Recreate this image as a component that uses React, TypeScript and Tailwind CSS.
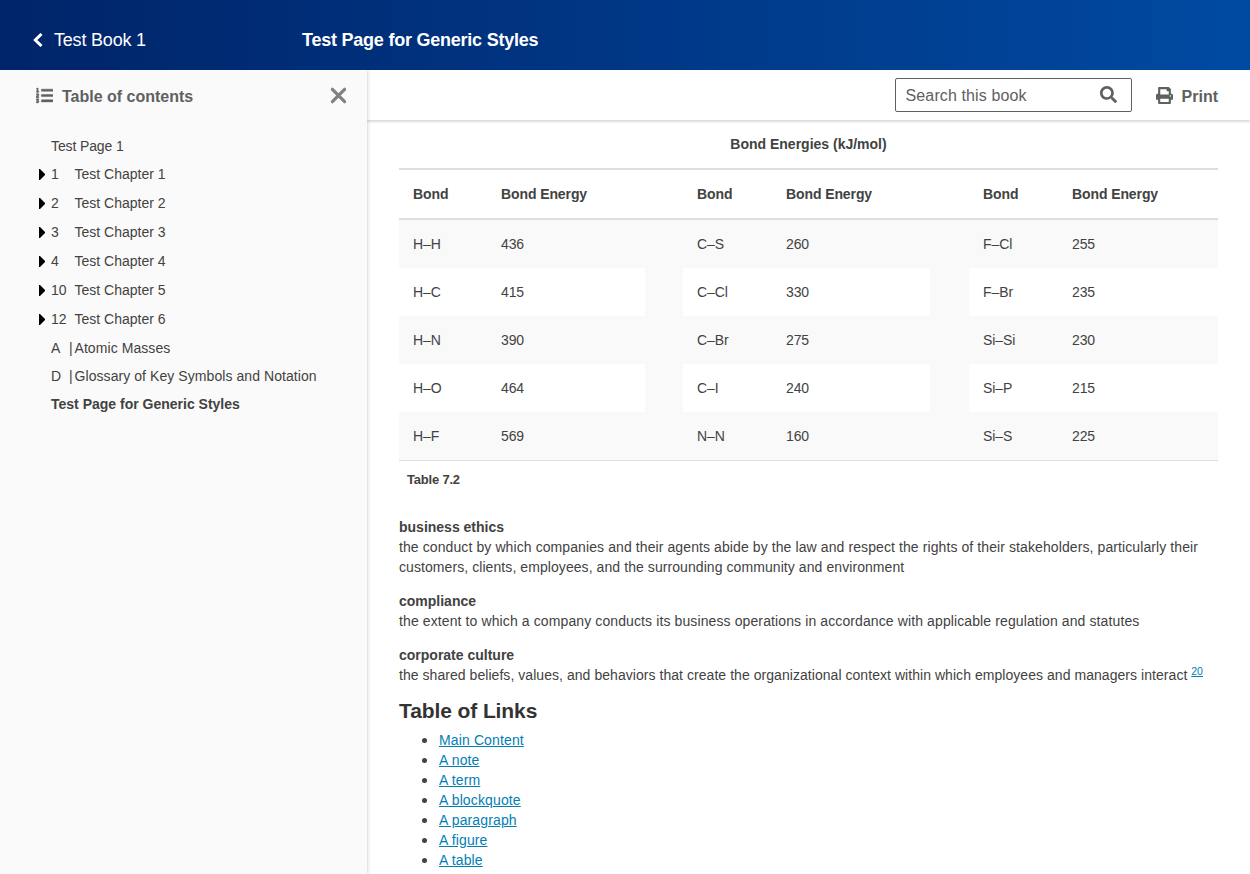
import type { ReactNode } from "react";
import { FaListOl, FaPrint, FaSearch } from "react-icons/fa";

const chapters = [
  ["1", "Test Chapter 1"],
  ["2", "Test Chapter 2"],
  ["3", "Test Chapter 3"],
  ["4", "Test Chapter 4"],
  ["10", "Test Chapter 5"],
  ["12", "Test Chapter 6"],
];

const appendices = [
  ["A", "Atomic Masses"],
  ["D", "Glossary of Key Symbols and Notation"],
];

const bonds = [
  ["H–H", "436", "C–S", "260", "F–Cl", "255"],
  ["H–C", "415", "C–Cl", "330", "F–Br", "235"],
  ["H–N", "390", "C–Br", "275", "Si–Si", "230"],
  ["H–O", "464", "C–I", "240", "Si–P", "215"],
  ["H–F", "569", "N–N", "160", "Si–S", "225"],
];

const links = ["Main Content", "A note", "A term", "A blockquote", "A paragraph", "A figure", "A table"];

function Header() {
  return (
    <header className="relative z-30 flex h-[70px] shrink-0 items-center bg-[linear-gradient(to_right,#002469,#004aa2)] pt-[10px] pl-[33px] text-[18px] leading-[30px] text-white">
      <a className="flex w-[269px] items-center">
        <svg className="mr-[11px] h-[14px] w-[10px]" viewBox="0 0 10 14" fill="none">
          <path d="M8.5 1 2.3 7l6.2 6" stroke="currentColor" strokeWidth="3" />
        </svg>
        <span className="tracking-[-0.2px]">Test Book 1</span>
      </a>
      <h1 className="font-bold tracking-[-0.23px]">Test Page for Generic Styles</h1>
    </header>
  );
}

function Sidebar() {
  return (
    <aside className="relative z-20 w-[367px] shrink-0 bg-[#fafafa] shadow-[0_0_4px_rgba(0,0,0,0.25)]">
      <div className="flex h-[62px] items-start pt-[16px] pr-[20px] pl-[36px] text-[#5e6062]">
        <FaListOl className="mt-[1px] h-[17px] w-[17px]" stroke="currentColor" strokeWidth="14" />
        <h2 className="ml-[9px] flex-1 text-[16px] leading-[22px] font-bold">Table of contents</h2>
        <svg className="mt-[1px] h-[17px] w-[17px]" viewBox="0 0 17 17" fill="none">
          <path d="m2.4 2.3 12.2 12.4M14.6 2.3 2.4 14.7" stroke="#818181" strokeWidth="3.2" strokeLinecap="round" />
        </svg>
      </div>
      <nav className="pl-[39px]">
        <div className="flex h-[28px] items-center pl-[12px] tracking-[-0.12px]">Test Page 1</div>
        {chapters.map(([n, t]) => (
          <div key={n} className="flex h-[29px] items-center">
            <svg className="w-[6px]" width="6" height="11" viewBox="0 0 6 11">
              <path d="M0 0h1L6 5v1l-5 5H0z" fill="#000" />
            </svg>
            <span className="ml-[6px] w-[23.5px] pb-[2px]">{n}</span>
            <span className="pb-[2px]">{t}</span>
          </div>
        ))}
        {appendices.map(([n, t]) => (
          <div key={n} className="flex h-[28px] items-center pl-[12px]">
            <span className="w-[18px]">{n}</span>
            <span className="w-[5.5px]">|</span>
            <span className="tracking-[0.07px]">{t}</span>
          </div>
        ))}
        <div className="flex h-[28px] items-center pl-[12px] font-bold">Test Page for Generic Styles</div>
      </nav>
    </aside>
  );
}

function Toolbar() {
  return (
    <div className="relative z-10 flex h-[50px] items-center justify-end bg-white pr-[32px] text-[#5e6062] shadow-[0_2px_2px_rgba(0,0,0,0.14)]">
      <div className="flex h-[34px] w-[237px] items-center rounded-[2px] border border-[#5e6062] pr-[14px] pl-[10px]">
        <span className="flex-1 pt-[2px] text-[16px] tracking-[0.12px]">Search this book</span>
        <FaSearch className="mb-px h-[17px] w-[17px]" />
      </div>
      <button className="ml-[24px] flex items-center text-[16px] font-bold">
        <FaPrint className="mr-[9px] h-[17px] w-[17px]" />
        <span className="-mb-[2px] pt-[2px]">Print</span>
      </button>
    </div>
  );
}

function BondTable() {
  const heads = ["Bond", "Bond Energy", "", "Bond", "Bond Energy", "", "Bond", "Bond Energy"];
  return (
    <>
      <table className="w-[819px] table-fixed border-collapse">
        <caption className="h-[48px] pt-[14px] pb-[14px] text-center font-bold">Bond Energies (kJ/mol)</caption>
        <colgroup>
          <col className="w-[88px]" />
          <col className="w-[158px]" />
          <col className="w-[38px]" />
          <col className="w-[89px]" />
          <col className="w-[158px]" />
          <col className="w-[39px]" />
          <col className="w-[89px]" />
          <col className="w-[160px]" />
        </colgroup>
        <thead>
          <tr className="h-[50px] border-y-2 border-[#dedede]">
            {heads.map((h, i) => (
              <th key={i} className="px-[14px] text-left font-bold tracking-[-0.1px]">{h}</th>
            ))}
          </tr>
        </thead>
        <tbody className="border-b border-[#dedede]">
          {bonds.map(([a, b, c, d, e, f]) => (
            <tr key={a} className="h-[48px] first:h-[49px] odd:bg-[#f9f9f9]">
              {[a, b, "", c, d, "", e, f].map((v, i) => (
                <td key={i} className={v ? "px-[14px] tracking-[-0.1px]" : "bg-[#f9f9f9]"}>{v}</td>
              ))}
            </tr>
          ))}
        </tbody>
      </table>
      <div className="pt-[9px] pl-[8px] text-[13px] font-bold tracking-[-0.2px]">Table 7.2</div>
    </>
  );
}

function Definition({ term, children }: { term: string; children: ReactNode }) {
  return (
    <div className="mb-[14px]">
      <dt className="font-bold">{term}</dt>
      <dd>{children}</dd>
    </div>
  );
}

export default function App() {
  return (
    <div className="flex h-[874px] w-[1250px] flex-col overflow-hidden bg-white font-['Liberation_Sans',Arial,sans-serif] text-[14px] leading-[20px] text-[#424242]">
      <Header />
      <div className="flex min-h-0 flex-1">
        <Sidebar />
        <div className="min-w-0 flex-1">
          <Toolbar />
          <main className="pr-[32px] pl-[32px]">
            <BondTable />
            <dl className="mt-[27px]">
              <Definition term="business ethics">
                <span className="tracking-[0.095px] whitespace-nowrap">
                  the conduct by which companies and their agents abide by the law and respect the rights of their stakeholders, particularly their
                </span>
                <br />
                <span className="tracking-[0.075px]">
                  customers, clients, employees, and the surrounding community and environment
                </span>
              </Definition>
              <Definition term="compliance">
                <span className="tracking-[0.11px]">
                  the extent to which a company conducts its business operations in accordance with applicable regulation and statutes
                </span>
              </Definition>
              <Definition term="corporate culture">
                <span className="tracking-[0.05px]">
                  the shared beliefs, values, and behaviors that create the organizational context within which employees and managers interact
                </span>{" "}
                <sup className="top-[-5px] text-[10.5px] leading-none text-[#027eb5] underline">20</sup>
              </Definition>
            </dl>
            <h2 className="mt-[-3px] mb-[4px] text-[21px] leading-[30px] font-bold tracking-[-0.1px] text-[#333]">Table of Links</h2>
            <ul>
              {links.map((l) => (
                <li key={l} className="flex items-center pl-[23px]">
                  <span className="mt-px mr-[12px] h-[5px] w-[5px] rounded-full bg-[#424242]" />
                  <a className="tracking-[0.13px] text-[#027eb5] underline">{l}</a>
                </li>
              ))}
            </ul>
          </main>
        </div>
      </div>
    </div>
  );
}
